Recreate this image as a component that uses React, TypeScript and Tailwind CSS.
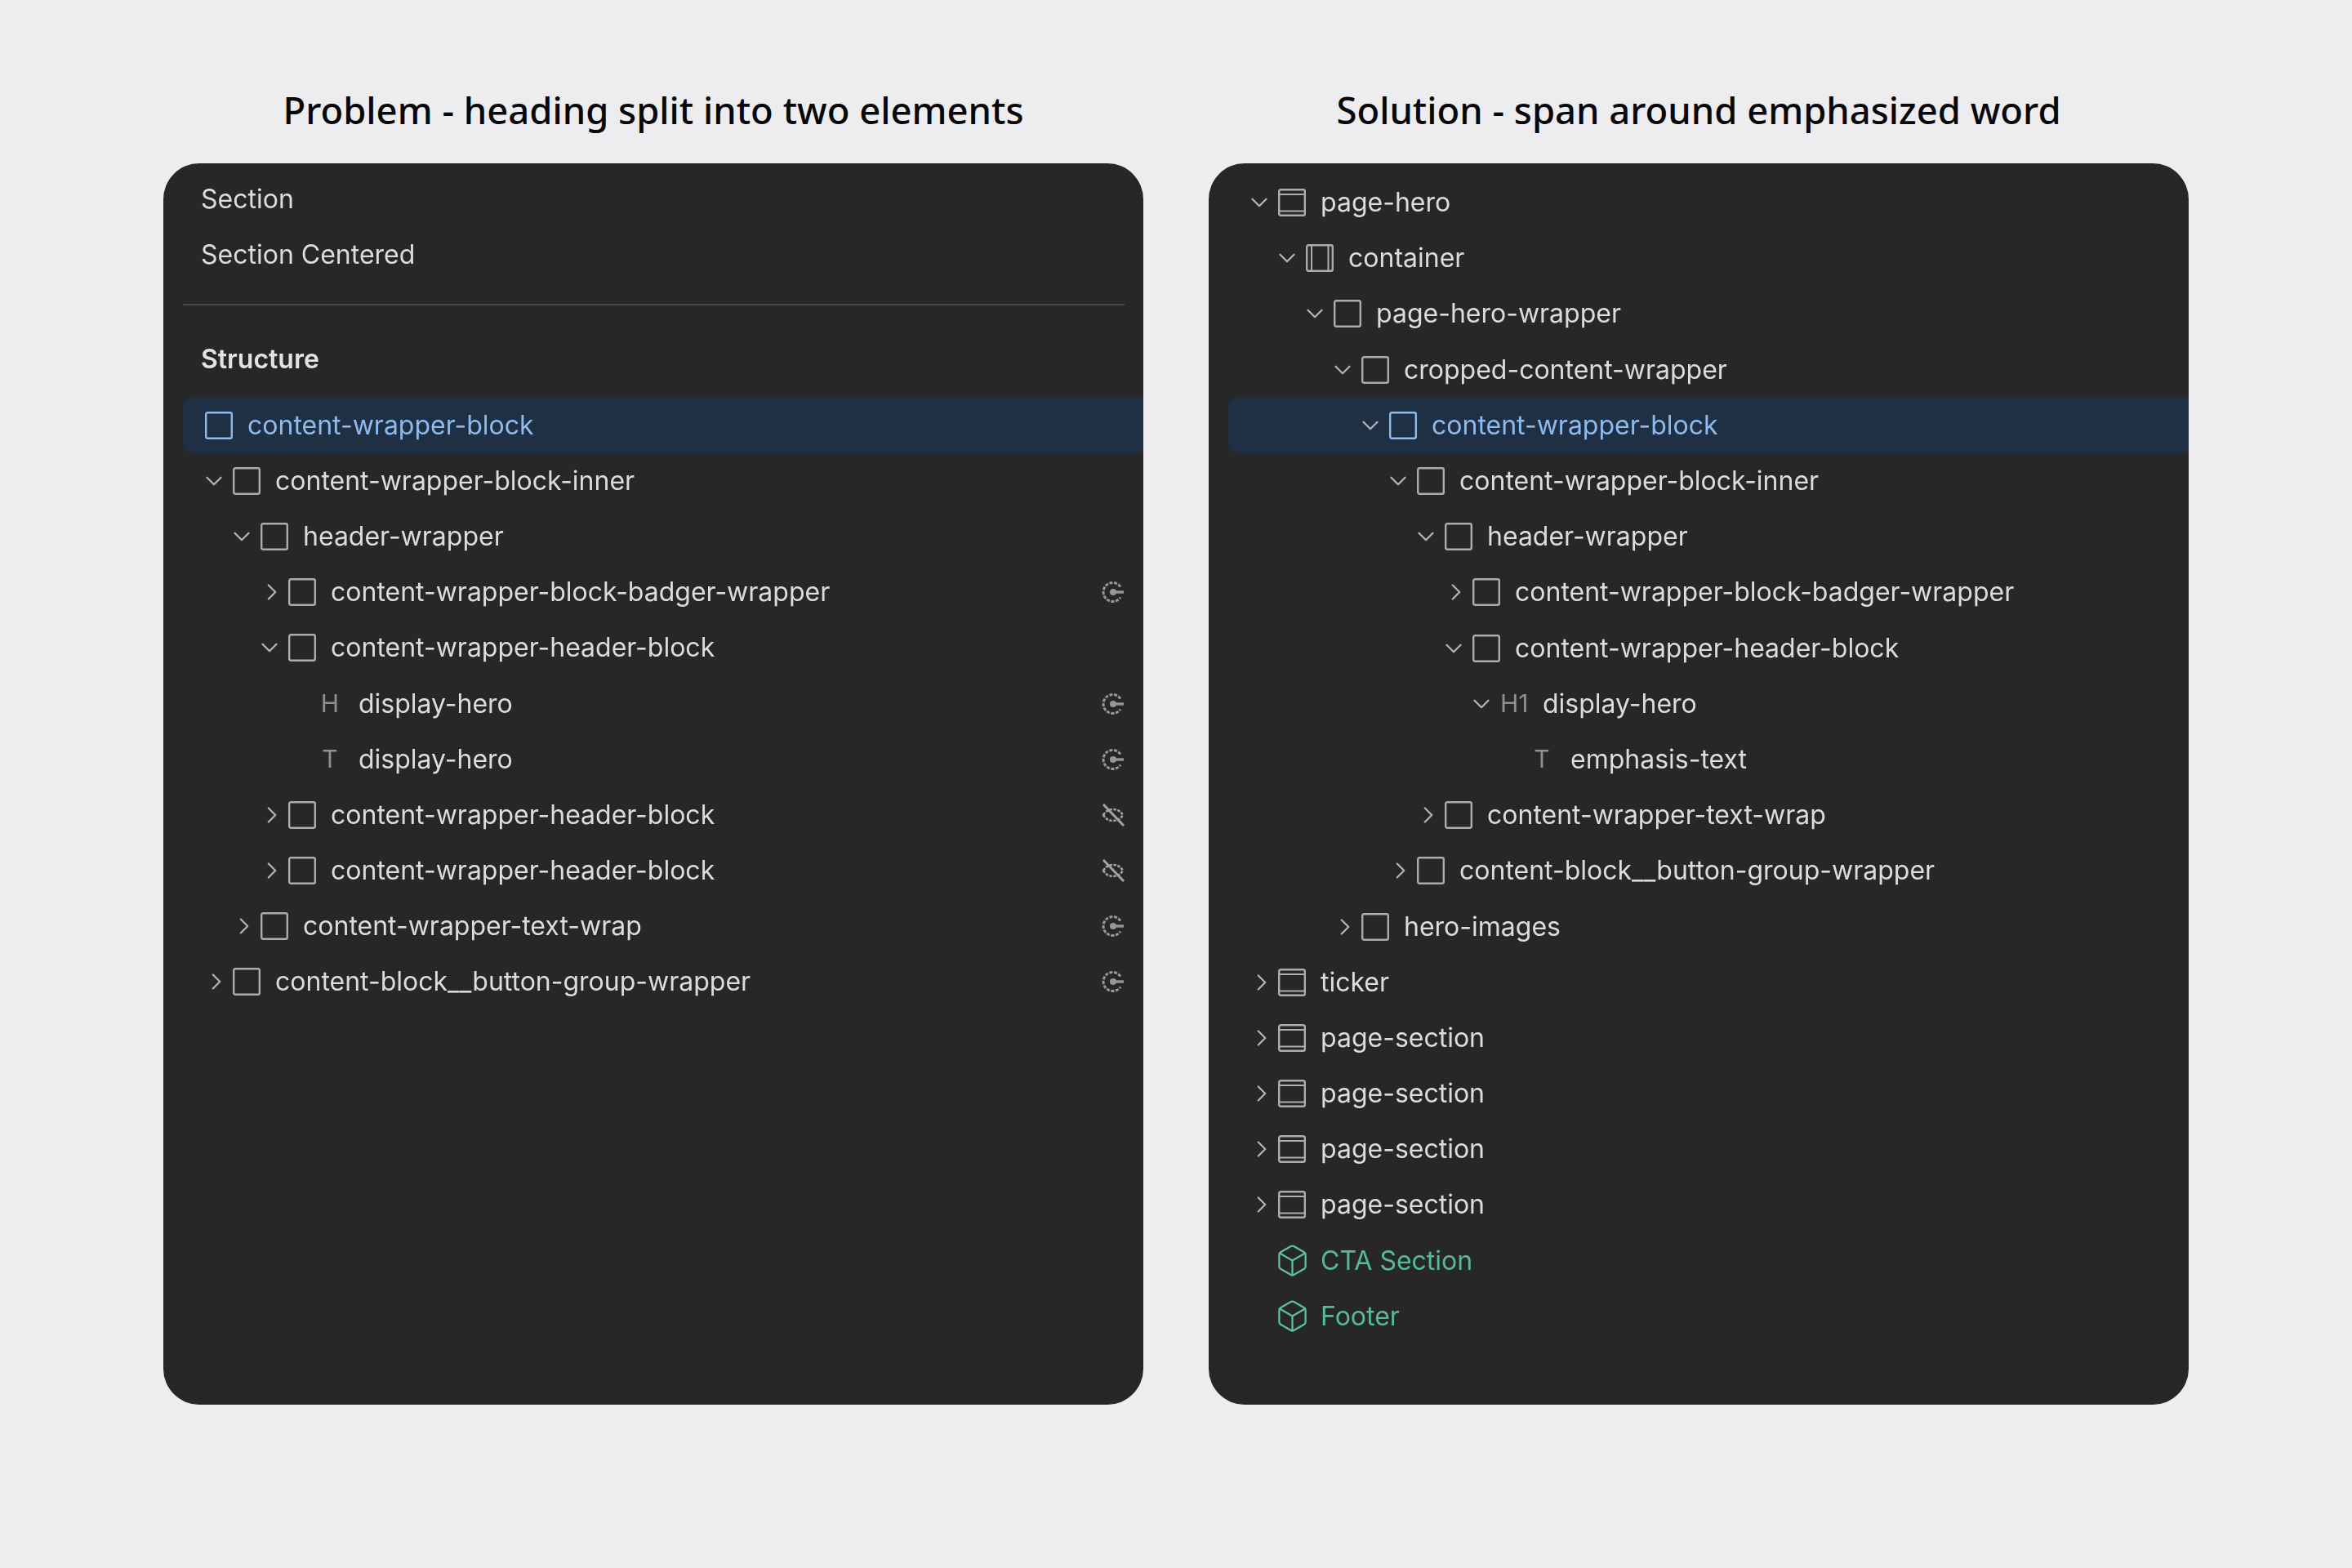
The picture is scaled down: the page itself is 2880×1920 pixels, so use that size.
import React from 'react';
import { Box, ChevronDown, ChevronRight } from 'lucide-react';

type IconKind = 'box' | 'section' | 'container' | 'component' | 'H' | 'H1' | 'T';

interface TreeRow {
  label: string;
  depth: number;
  icon: IconKind;
  caret?: 'open' | 'closed';
  status?: 'linked' | 'hidden';
  selected?: boolean;
}

const problemRows: TreeRow[] = [
  { label: 'content-wrapper-block', depth: 0, icon: 'box', selected: true },
  { label: 'content-wrapper-block-inner', depth: 1, icon: 'box', caret: 'open' },
  { label: 'header-wrapper', depth: 2, icon: 'box', caret: 'open' },
  { label: 'content-wrapper-block-badger-wrapper', depth: 3, icon: 'box', caret: 'closed', status: 'linked' },
  { label: 'content-wrapper-header-block', depth: 3, icon: 'box', caret: 'open' },
  { label: 'display-hero', depth: 4, icon: 'H', status: 'linked' },
  { label: 'display-hero', depth: 4, icon: 'T', status: 'linked' },
  { label: 'content-wrapper-header-block', depth: 3, icon: 'box', caret: 'closed', status: 'hidden' },
  { label: 'content-wrapper-header-block', depth: 3, icon: 'box', caret: 'closed', status: 'hidden' },
  { label: 'content-wrapper-text-wrap', depth: 2, icon: 'box', caret: 'closed', status: 'linked' },
  { label: 'content-block__button-group-wrapper', depth: 1, icon: 'box', caret: 'closed', status: 'linked' },
];

const solutionRows: TreeRow[] = [
  { label: 'page-hero', depth: 1, icon: 'section', caret: 'open' },
  { label: 'container', depth: 2, icon: 'container', caret: 'open' },
  { label: 'page-hero-wrapper', depth: 3, icon: 'box', caret: 'open' },
  { label: 'cropped-content-wrapper', depth: 4, icon: 'box', caret: 'open' },
  { label: 'content-wrapper-block', depth: 5, icon: 'box', caret: 'open', selected: true },
  { label: 'content-wrapper-block-inner', depth: 6, icon: 'box', caret: 'open' },
  { label: 'header-wrapper', depth: 7, icon: 'box', caret: 'open' },
  { label: 'content-wrapper-block-badger-wrapper', depth: 8, icon: 'box', caret: 'closed' },
  { label: 'content-wrapper-header-block', depth: 8, icon: 'box', caret: 'open' },
  { label: 'display-hero', depth: 9, icon: 'H1', caret: 'open' },
  { label: 'emphasis-text', depth: 10, icon: 'T' },
  { label: 'content-wrapper-text-wrap', depth: 7, icon: 'box', caret: 'closed' },
  { label: 'content-block__button-group-wrapper', depth: 6, icon: 'box', caret: 'closed' },
  { label: 'hero-images', depth: 4, icon: 'box', caret: 'closed' },
  { label: 'ticker', depth: 1, icon: 'section', caret: 'closed' },
  { label: 'page-section', depth: 1, icon: 'section', caret: 'closed' },
  { label: 'page-section', depth: 1, icon: 'section', caret: 'closed' },
  { label: 'page-section', depth: 1, icon: 'section', caret: 'closed' },
  { label: 'page-section', depth: 1, icon: 'section', caret: 'closed' },
  { label: 'CTA Section', depth: 1, icon: 'component' },
  { label: 'Footer', depth: 1, icon: 'component' },
];

const RowIcon = ({ kind }: { kind: IconKind }) => {
  if (kind === 'H' || kind === 'T' || kind === 'H1') {
    return <span className="w-[34px] shrink-0 text-center text-[30px] text-[#8f8f91]">{kind}</span>;
  }
  if (kind === 'component') {
    return <Box size={43} strokeWidth={1.25} className="-mx-[4.5px] shrink-0 text-[#5cc29a]" />;
  }
  return (
    <svg viewBox="0 0 34 34" className="h-[34px] w-[34px] shrink-0" fill="none" stroke="currentColor" strokeWidth="2.4">
      <rect x="1.2" y="1.2" width="31.6" height="31.6" rx="2" />
      {kind === 'section' && <path d="M1 7h32M1 27.5h32" strokeWidth="2" />}
      {kind === 'container' && <path d="M7 1v32M27.5 1v32" strokeWidth="2" />}
    </svg>
  );
};

const StatusIcon = ({ kind }: { kind: 'linked' | 'hidden' }) =>
  kind === 'linked' ? (
    <svg viewBox="0 0 28 28" className="h-[28px] w-[28px] text-[#97979a]" fill="none" stroke="currentColor">
      <path d="M23 7.5A11.5 11.5 0 1 0 23 20.5" strokeWidth="3" strokeDasharray="4 1.6" />
      <circle cx="14" cy="14" r="4" fill="currentColor" stroke="none" />
      <path d="M14 14h13" strokeWidth="3.4" />
    </svg>
  ) : (
    <svg viewBox="0 0 28 28" className="h-[28px] w-[28px] text-[#a3a3a6]" fill="none" stroke="currentColor">
      <path d="M2 14c3-5 7-7 12-7s9 2 12 7c-3 5-7 7-12 7S5 19 2 14Z" strokeWidth="2.6" strokeDasharray="3.5 1.5" />
      <path d="M2 1l25 26" strokeWidth="3" />
    </svg>
  );

const Row = ({ row }: { row: TreeRow }) => {
  const isComponent = row.icon === 'component';
  const color = row.selected ? 'text-[#8dbbee]' : isComponent ? 'text-[#57bb91]' : 'text-[#dcdcde]';
  const iconColor = row.selected ? 'text-[#8dbbee]' : 'text-[#acacae]';
  return (
    <div
      className={`flex h-[68.2px] items-center pr-[23px] ${row.selected ? 'rounded-l-[10px] bg-[#1f2f44]' : ''}`}
      style={{ paddingLeft: 27 + row.depth * 34 }}
    >
      <span className={`flex shrink-0 items-center ${iconColor}`}>
        <span className="-ml-[40px] mr-[6px] flex w-[34px] justify-center text-[#b4b4b6]">
          {row.caret === 'open' && <ChevronDown size={34} strokeWidth={1.6} />}
          {row.caret === 'closed' && <ChevronRight size={34} strokeWidth={1.6} className="translate-x-[3px]" />}
        </span>
        <RowIcon kind={row.icon} />
      </span>
      <span className={`ml-[18px] whitespace-nowrap text-[32px] ${color}`}>{row.label}</span>
      {row.status && (
        <span className="ml-auto flex">
          <StatusIcon kind={row.status} />
        </span>
      )}
    </div>
  );
};

const Column = ({ title, children }: { title: string; children: React.ReactNode }) => (
  <div className="flex w-[1200px] flex-col">
    <h2 className="flex h-[200px] items-start justify-center pt-[102px] font-['Noto_Sans',sans-serif] text-[45.4px] leading-[64px] font-[550] text-[#08080a]">
      {title}
    </h2>
    <div className="h-[1520px] overflow-hidden rounded-[44px] bg-[#272629] pl-[24px]">
      <div className="blur-[0.7px]">{children}</div>
    </div>
  </div>
);

export default function App() {
  return (
    <div className="flex h-[1920px] justify-center gap-[80px] bg-[#edecef] font-['Inter',sans-serif]">
      <Column title="Problem - heading split into two elements">
        <div className="pt-[10px]">
          <div className="flex h-[68px] items-center pl-[22px] text-[32px] text-[#dcdcde]">Section</div>
          <div className="flex h-[68px] items-center pl-[22px] text-[32px] text-[#dcdcde]">Section Centered</div>
        </div>
        <div className="mr-[23px] mt-[26px] h-[2px] bg-[#47464a]" />
        <div className="flex h-[112.5px] items-center pl-[22px] pt-[20px] text-[32px] font-semibold text-[#e2e2e4]">Structure</div>
        {problemRows.map((row, i) => (
          <Row key={i} row={row} />
        ))}
      </Column>
      <Column title="Solution - span around emphasized word">
        <div className="pt-[14px]">
          {solutionRows.map((row, i) => (
            <Row key={i} row={row} />
          ))}
        </div>
      </Column>
    </div>
  );
}
